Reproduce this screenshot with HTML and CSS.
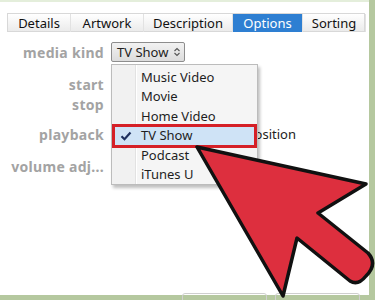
FILE: index.html
```html
<!DOCTYPE html>
<html>
<head>
<meta charset="utf-8">
<link rel="stylesheet" href="styles.css">
</head>
<body>
<div class="window">
  <div class="tabs">
    <div class="tab">Details</div>
    <div class="tab">Artwork</div>
    <div class="tab">Description</div>
    <div class="tab active">Options</div>
    <div class="tab">Sorting</div>
  </div>
  <div class="form">
    <div class="row r1">
      <div class="label">media kind</div>
      <div class="select"><span>TV Show</span>
        <svg class="updown" width="8" height="10" viewBox="0 0 8 10"><path d="M1.5 4 L4 1.5 L6.5 4 M1.5 6 L4 8.5 L6.5 6" fill="none" stroke="#555" stroke-width="1.1"/></svg>
      </div>
    </div>
    <div class="row r2"><div class="label">start</div></div>
    <div class="row r3"><div class="label">stop</div></div>
    <div class="row r4">
      <div class="label">playback</div>
      <div class="check-field"><span class="box"></span>Remember position</div>
    </div>
    <div class="row r5">
      <div class="label">volume adj...</div>
      <div class="slider">-</div>
    </div>
  </div>
  <div class="buttons">
    <div class="btn"></div>
    <div class="btn"></div>
  </div>
  <div class="menu">
    <div class="item">Music Video</div>
    <div class="item">Movie</div>
    <div class="item">Home Video</div>
    <div class="item selected">
      <svg class="tick" width="12" height="10" viewBox="0 0 12 10"><path d="M1.5 5.2 L4.5 8.2 L10.5 1.5" fill="none" stroke="#1d2f5e" stroke-width="2.2"/></svg>
      TV Show
    </div>
    <div class="item">Podcast</div>
    <div class="item">iTunes U</div>
  </div>
</div>
<svg class="arrow" width="375" height="300" viewBox="0 0 375 300">
  <path d="M197 147 L366 184 L318 213 L368 253 Q378 264 366 276 Q358 286 350 281 L297 238 L283 296 Z" fill="#dd2f3e" stroke="#111" stroke-width="3.5" stroke-linejoin="round"/>
</svg>
</body>
</html>
```
FILE: styles.css
```css
html, body {
  margin: 0;
  padding: 0;
}
body {
  width: 375px;
  height: 300px;
  background: #b5c89f;
  font-family: "Noto Sans", "Open Sans", sans-serif;
  position: relative;
  overflow: hidden;
}
.window {
  position: relative;
  width: 369px;
  height: 295px;
  background: #fff;
  border-top: 2px solid #e4eedb;
  padding-top: 11px;
  box-sizing: border-box;
}
.tabs {
  margin-left: 7px;
  width: 358px;
  height: 19px;
  display: grid;
  grid-template-columns: 63px 73px 89px 70px 63px;
  border: 1px solid #d8d8d8;
  box-sizing: border-box;
  background: linear-gradient(#ffffff, #ebebeb);
}
.tab {
  font-size: 13px;
  line-height: 18px;
  text-align: center;
  color: #111;
  white-space: nowrap;
  border-right: 1px solid #e2e2e2;
}
.tab.active {
  background: #2e7fd2;
  color: #fff;
}
.form {
  display: flex;
  flex-direction: column;
  margin-top: 10px;
}
.row {
  display: flex;
  align-items: center;
  height: 20px;
  gap: 7px;
}
.r2 { margin-top: 12px; }
.r4 { margin-top: 10px; }
.r5 { margin-top: 12px; }
.label {
  width: 104px;
  flex: none;
  text-align: right;
  font-size: 14px;
  font-weight: 700;
  color: #a3a3a3;
  letter-spacing: 0.3px;
  white-space: nowrap;
}
.select {
  width: 74px;
  height: 20px;
  box-sizing: border-box;
  border: 1px solid #8d8d8d;
  border-radius: 2px;
  background: linear-gradient(#f2f2f2, #dcdcdc);
  font-size: 13px;
  line-height: 18px;
  color: #222;
  padding-left: 5px;
  display: flex;
  align-items: center;
  gap: 5px;
  white-space: nowrap;
}
.check-field {
  width: 185px;
  display: flex;
  justify-content: flex-end;
  align-items: center;
  gap: 4px;
  font-size: 13px;
  color: #222;
  white-space: nowrap;
}
.box {
  width: 11px;
  height: 11px;
  border: 1px solid #999;
}
.slider {
  font-size: 12px;
  color: #555;
  margin-top: 10px;
}
.buttons {
  position: absolute;
  left: 182px;
  top: 291px;
  display: flex;
  gap: 8px;
}
.btn {
  width: 83px;
  height: 10px;
  border: 1px solid #cfcfcf;
  border-radius: 3px;
}
.menu {
  position: absolute;
  left: 111px;
  top: 62px;
  width: 147px;
  height: 121px;
  box-sizing: border-box;
  padding: 3px 2px 2px 2px;
  border: 1px solid #bcbcbc;
  background: linear-gradient(90deg, #f1f1f1 0, #f1f1f1 23px, #e2e2e2 23px, #e2e2e2 24px, #fff 24px, #fff 25px, #f5f5f5 25px);
  box-shadow: 2px 3px 3px rgba(0,0,0,0.25);
}
.item {
  position: relative;
  height: 19.4px;
  line-height: 19px;
  font-size: 13px;
  color: #1e1e1e;
  padding-left: 27px;
  white-space: nowrap;
}
.item.selected {
  background: #cfe3f6;
  outline: 3px solid #d52027;
  outline-offset: -1px;
}
.tick {
  position: absolute;
  left: 6px;
  top: 5px;
}
.arrow {
  position: absolute;
  left: 0;
  top: 0;
}
```
